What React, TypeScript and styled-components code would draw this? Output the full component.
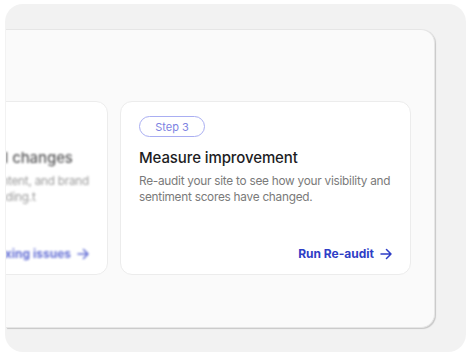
import React from "react";
import styled, { createGlobalStyle } from "styled-components";

const GlobalStyle = createGlobalStyle`
  html, body {
    margin: 0;
    padding: 0;
    background: #ffffff;
    font-family: Inter, "Noto Sans", Arial, sans-serif;
  }
`;

const Page = styled.div`
  width: 470px;
  height: 357px;
  padding: 4px 4px 5px 5px;
  box-sizing: border-box;
`;

const OuterPanel = styled.div`
  height: 348px;
  background: #f2f2f2;
  border-radius: 18px;
  padding-top: 25px;
  box-sizing: border-box;
  overflow: hidden;
`;

const Stage = styled.div`
  width: 429px;
  height: 299px;
  margin-left: 1px;
  background: #fafafa;
  border: 1px solid #e6e6e6;
  border-left: none;
  border-radius: 0 14px 14px 0;
  box-shadow: 1px 1px 1px rgba(0, 0, 0, 0.18);
  box-sizing: border-box;
  display: flex;
  justify-content: flex-end;
  gap: 12px;
  padding: 71px 23px 0 0;
  overflow: hidden;
`;

const Card = styled.div<{ $faded?: boolean }>`
  flex: 0 0 291px;
  height: 174px;
  background: #ffffff;
  border: 1px solid #ececec;
  border-radius: 12px;
  box-sizing: border-box;
  padding: 14px 18px 12px 18px;
  display: flex;
  flex-direction: column;

  & > * {
    filter: ${(p) => (p.$faded ? "blur(0.9px)" : "none")};
    opacity: ${(p) => (p.$faded ? 0.75 : 1)};
  }
`;

const StepPill = styled.span`
  align-self: flex-start;
  width: 66px;
  height: 21px;
  box-sizing: border-box;
  border: 1px solid #a9aef2;
  border-radius: 11px;
  color: #7d83e2;
  font-size: 11px;
  display: flex;
  align-items: center;
  justify-content: center;
`;

const Title = styled.h3`
  margin: 11px 0 0;
  font-size: 15px;
  font-weight: 500;
  color: #1d1d1f;
  letter-spacing: -0.1px;
  line-height: 20px;
  white-space: nowrap;
`;

const Description = styled.p`
  margin: 5px 0 0;
  font-size: 11.8px;
  letter-spacing: -0.25px;
  line-height: 16px;
  color: #7a7a7a;
  white-space: nowrap;
`;

const ActionLink = styled.a`
  margin-top: auto;
  align-self: flex-end;
  display: flex;
  align-items: center;
  gap: 6px;
  font-size: 12px;
  font-weight: 700;
  color: #2f3ec6;
  text-decoration: none;
  line-height: 16px;
`;

const Arrow = () => (
  <svg width="12" height="12" viewBox="0 0 12 12" fill="none">
    <path
      d="M1 6h10M6.5 1.5 11 6l-4.5 4.5"
      stroke="currentColor"
      strokeWidth="1.5"
      strokeLinecap="round"
      strokeLinejoin="round"
    />
  </svg>
);

const steps = [
  {
    step: "Step 2",
    title: "Implement your technical changes",
    lines: ["Improve your site's structure, content, and brand", "messaging to boost AI understanding.t"],
    action: "Start fixing issues",
    faded: true,
  },
  {
    step: "Step 3",
    title: "Measure improvement",
    lines: ["Re-audit your site to see how your visibility and", "sentiment scores have changed."],
    action: "Run Re-audit",
    faded: false,
  },
];

export default function App() {
  return (
    <>
      <GlobalStyle />
      <Page>
        <OuterPanel>
          <Stage>
            {steps.map((s) => (
              <Card key={s.step} $faded={s.faded}>
                <StepPill>{s.step}</StepPill>
                <Title>{s.title}</Title>
                <Description>
                  {s.lines[0]}
                  <br />
                  {s.lines[1]}
                </Description>
                <ActionLink href="#">
                  {s.action}
                  <Arrow />
                </ActionLink>
              </Card>
            ))}
          </Stage>
        </OuterPanel>
      </Page>
    </>
  );
}
